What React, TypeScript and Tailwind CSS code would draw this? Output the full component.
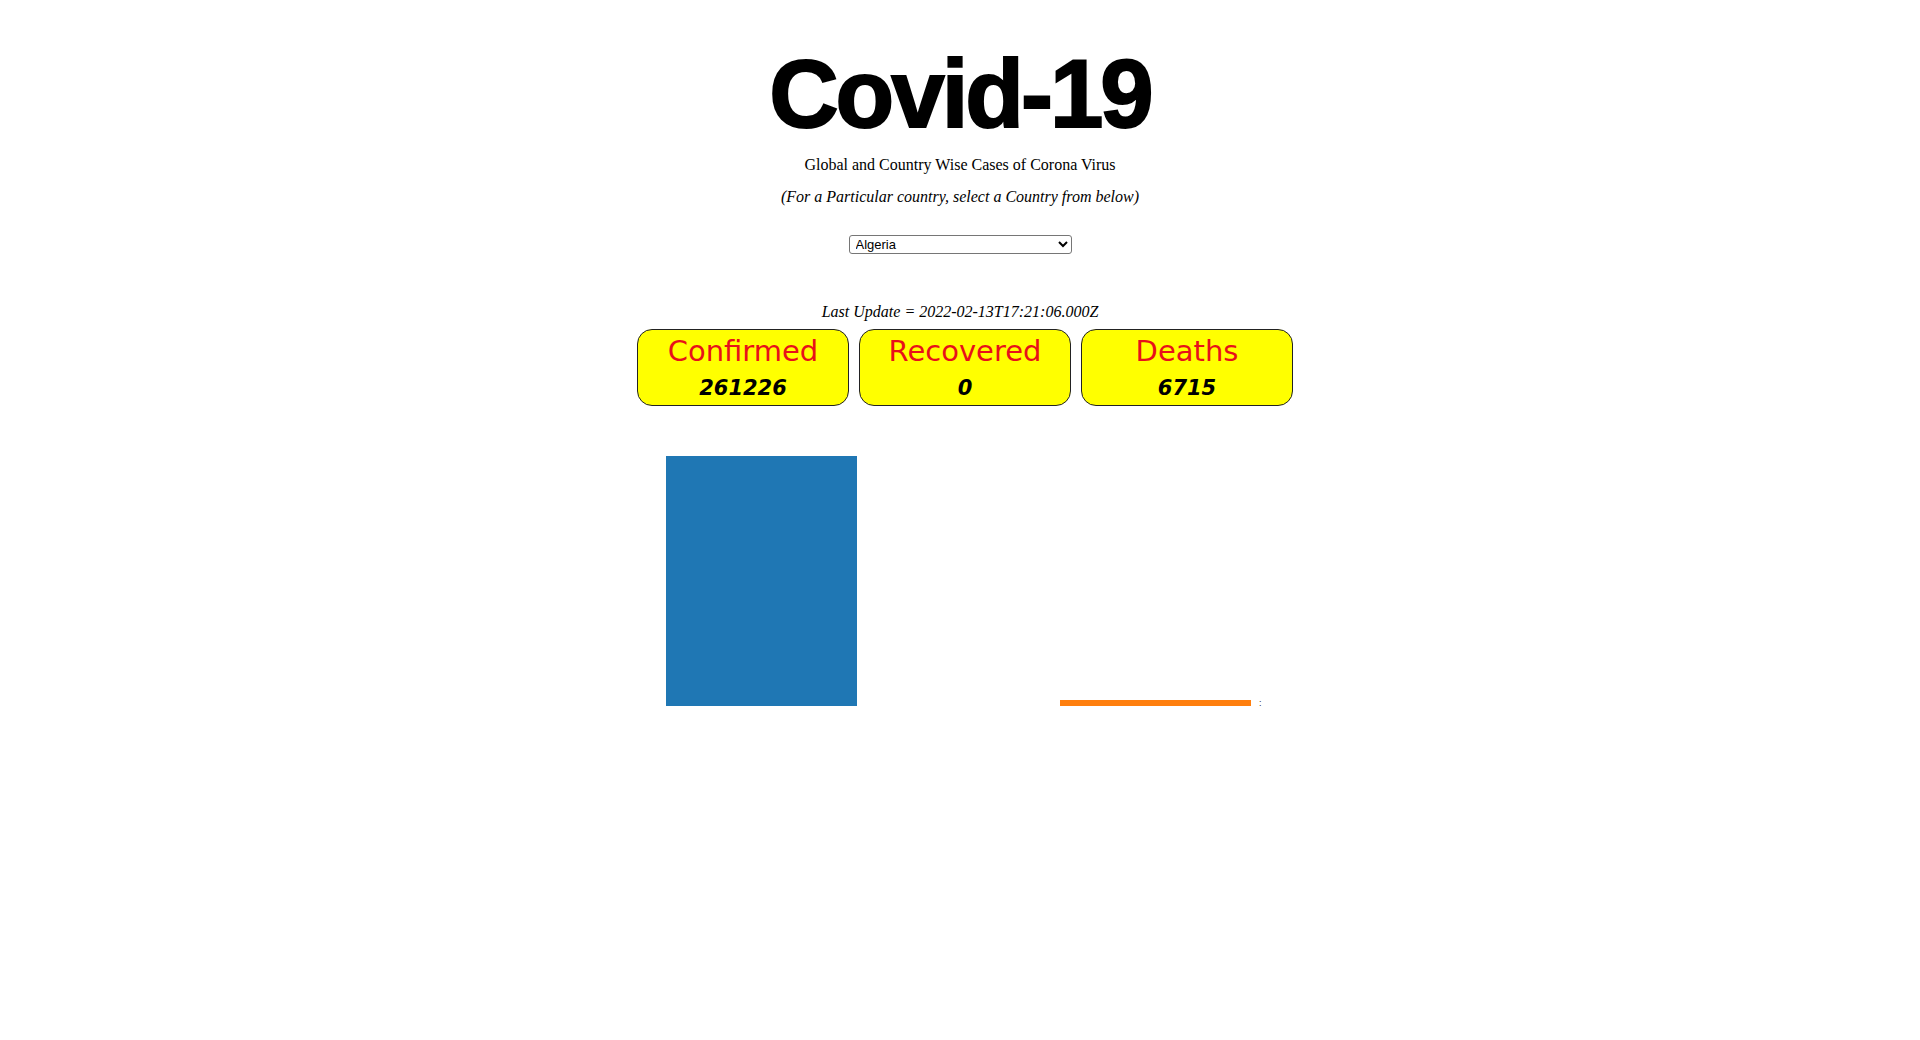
const stats = [
  { label: "Confirmed", value: 261226, color: "#1f77b4" },
  { label: "Recovered", value: 0, color: "#2ca02c" },
  { label: "Deaths", value: 6715, color: "#ff7f0e" },
];

const CHART_HEIGHT = 250;

export default function App() {
  const max = Math.max(...stats.map((s) => s.value));

  return (
    <div className="w-full min-h-[1040px] bg-white text-black text-center font-['Liberation_Serif',serif]">
      <h1 className="pt-[39px] text-[96px] leading-[110px] font-bold tracking-[-3px] font-['Liberation_Sans',Arial,sans-serif] [-webkit-text-stroke:2px_black]">
        Covid-19
      </h1>
      <p className="mt-[6px] text-[16px] leading-[20px]">Global and Country Wise Cases of Corona Virus</p>
      <p className="mt-[12px] text-[16px] leading-[20px] italic">
        (For a Particular country, select a Country from below)
      </p>

      <div className="mt-[28px] flex justify-center">
        <select
          defaultValue="Algeria"
          className="w-[223px] h-[19px] pl-[2px] text-[13px] bg-white border border-[#767676] rounded-[3px] font-['Liberation_Sans',Arial,sans-serif]"
        >
          <option>Afghanistan</option>
          <option>Albania</option>
          <option>Algeria</option>
          <option>Andorra</option>
          <option>Angola</option>
        </select>
      </div>

      <p className="mt-[48px] text-[16px] leading-[20px] italic">Last Update = 2022-02-13T17:21:06.000Z</p>

      {/* stat cards */}
      <div className="mt-[7px] flex justify-center gap-[10px] pl-[10px]">
        {stats.map((s) => (
          <div
            key={s.label}
            className="w-[212px] h-[77px] pt-[5px] bg-[#ffff00] border border-[#222] rounded-[15px] font-['DejaVu_Sans',Verdana,sans-serif]"
          >
            <div className="text-[29px] leading-[32px] text-[#e8101a]">{s.label}</div>
            <div className="mt-[8px] text-[21px] leading-[26px] font-bold italic">{s.value}</div>
          </div>
        ))}
      </div>

      {/* bar chart */}
      <div className="mt-[50px] flex justify-center">
        <div className="relative flex items-end gap-[6px] h-[250px] -ml-[4px]">
          {stats.map((s) => (
            <div
              key={s.label}
              className="w-[191px]"
              style={{ height: Math.round((s.value / max) * CHART_HEIGHT), backgroundColor: s.color }}
            />
          ))}
          <span className="absolute right-[-11px] bottom-[-2px] text-[9px] leading-[10px] text-[#333] font-['Liberation_Sans',sans-serif]">
            :
          </span>
        </div>
      </div>
    </div>
  );
}
